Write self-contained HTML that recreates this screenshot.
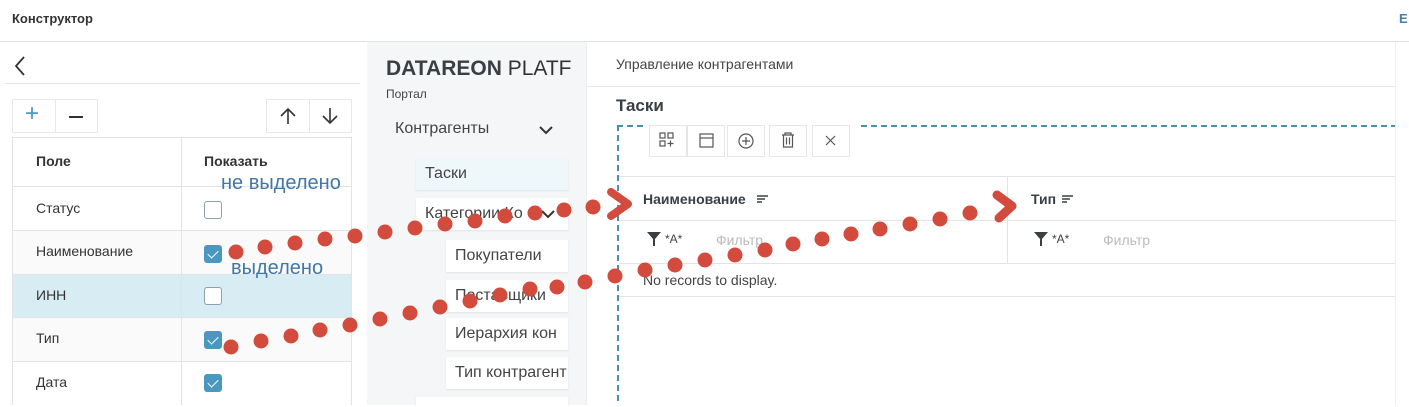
<!DOCTYPE html>
<html><head><meta charset="utf-8"><style>
*{box-sizing:border-box;margin:0;padding:0}
body{width:1409px;height:405px;overflow:hidden;background:#fff;font-family:"Liberation Sans",sans-serif;color:#333;position:relative}
.a{position:absolute}
.t{font-size:14px;color:#333}
.cb{position:absolute;width:18px;height:18px;border:1px solid #8aa1b1;border-radius:3px;background:#fff}
.cb.on{background:#4a98c0;border-color:#4a98c0}
.cb.on:after{content:"";position:absolute;left:5px;top:2px;width:5px;height:9px;border:solid #fff;border-width:0 1.5px 1.5px 0;transform:rotate(45deg)}
.mi{position:absolute;background:#fff;box-shadow:0 1px 2px rgba(0,0,0,.08);font-size:16px;color:#444;padding-left:9px;line-height:32px;white-space:nowrap;overflow:hidden}
.tb{position:absolute;top:125px;width:38px;height:32px;border:1px solid #e6e6e6;background:#fff}
</style></head><body>
<div class="a" style="left:12px;top:11px;font-size:13px;font-weight:bold;color:#333">Конструктор</div>
<div class="a" style="left:1399px;top:11px;font-size:13px;font-weight:bold;color:#4a7fa8">Е</div>
<div class="a" style="left:0;top:41px;width:1409px;height:1px;background:#e3e3e3"></div>

<svg class="a" style="left:10px;top:55px" width="20" height="22"><path d="M14 2 L6 11 L14 20" stroke="#333" stroke-width="1.8" fill="none"/></svg>
<div class="a" style="left:5px;top:83px;width:355px;height:1px;background:#e3e3e3"></div>
<div class="a" style="left:12px;top:99px;width:86px;height:34px;border:1px solid #e8e8e8"></div>
<div class="a" style="left:55px;top:99px;width:1px;height:34px;background:#e8e8e8"></div>
<div class="a" style="left:25px;top:100px;font-size:24px;color:#4a98c0;font-weight:300">+</div>
<div class="a" style="left:69px;top:116px;width:14px;height:1.5px;background:#333"></div>
<div class="a" style="left:266px;top:99px;width:86px;height:34px;border:1px solid #e8e8e8"></div>
<div class="a" style="left:309px;top:99px;width:1px;height:34px;background:#e8e8e8"></div>
<svg class="a" style="left:278px;top:106px" width="20" height="20"><path d="M10 18V3M3 10L10 3L17 10" stroke="#333" stroke-width="1.6" fill="none"/></svg>
<svg class="a" style="left:320px;top:106px" width="20" height="20"><path d="M10 2V17M3 10L10 17L17 10" stroke="#333" stroke-width="1.6" fill="none"/></svg>

<div class="a" style="left:12px;top:137px;width:340px;height:268px;border:1px solid #e3e3e3;border-bottom:none"></div>
<div class="a" style="left:13px;top:274px;width:338px;height:44px;background:#d7ecf3"></div>
<div class="a" style="left:13px;top:231px;width:338px;height:43px;background:#fafafa"></div>
<div class="a" style="left:13px;top:318px;width:338px;height:43px;background:#fafafa"></div>
<div class="a" style="left:181px;top:137px;width:1px;height:268px;background:#e3e3e3"></div>
<div class="a" style="left:12px;top:186px;width:340px;height:1px;background:#e3e3e3"></div>
<div class="a" style="left:12px;top:230px;width:340px;height:1px;background:#e3e3e3"></div>
<div class="a" style="left:12px;top:274px;width:340px;height:1px;background:#e3e3e3"></div>
<div class="a" style="left:12px;top:317px;width:340px;height:1px;background:#e3e3e3"></div>
<div class="a" style="left:12px;top:361px;width:340px;height:1px;background:#e3e3e3"></div>
<div class="a t" style="left:36px;top:153px;font-weight:bold">Поле</div>
<div class="a t" style="left:204px;top:153px;font-weight:bold">Показать</div>
<div class="a t" style="left:36px;top:200px">Статус</div>
<div class="a t" style="left:36px;top:243px">Наименование</div>
<div class="a t" style="left:36px;top:287px">ИНН</div>
<div class="a t" style="left:36px;top:330px">Тип</div>
<div class="a t" style="left:36px;top:374px">Дата</div>
<div class="cb" style="left:204px;top:201px"></div>
<div class="cb on" style="left:204px;top:245px"></div>
<div class="cb" style="left:204px;top:287px"></div>
<div class="cb on" style="left:204px;top:331px"></div>
<div class="cb on" style="left:204px;top:374px"></div>
<div class="a" style="left:221px;top:172px;font-size:20px;color:#3f78a8">не выделено</div>
<div class="a" style="left:231px;top:257px;font-size:20px;color:#3f78a8">выделено</div>

<div class="a" style="left:367px;top:42px;width:219px;height:363px;background:#f5f6f8"></div>
<div class="a" style="left:386px;top:57px;font-size:21px;color:#333;white-space:nowrap;width:200px;overflow:hidden"><b style="color:#3a3f44">DATAREON</b> PLATF</div>
<div class="a" style="left:386px;top:87px;font-size:12px;color:#444">Портал</div>
<div class="a" style="left:395px;top:120px;font-size:16px;color:#444">Контрагенты</div>
<svg class="a" style="left:538px;top:124px" width="16" height="12"><path d="M2 3L8 9L14 3" stroke="#333" stroke-width="2" fill="none"/></svg>
<div class="mi" style="left:416px;top:158px;width:152px;background:#eef8fb">Таски</div>
<div class="mi" style="left:416px;top:198px;width:152px">Категории Ко</div>
<svg class="a" style="left:540px;top:208px" width="16" height="12"><path d="M2 3L8 9L14 3" stroke="#333" stroke-width="2" fill="none"/></svg>
<div class="mi" style="left:446px;top:240px;width:122px">Покупатели</div>
<div class="mi" style="left:446px;top:280px;width:122px">Поставщики</div>
<div class="mi" style="left:446px;top:318px;width:122px">Иерархия кон</div>
<div class="mi" style="left:446px;top:357px;width:122px">Тип контрагент</div>
<div class="mi" style="left:416px;top:397px;width:152px;height:10px"></div>

<div class="a" style="left:586px;top:42px;width:1px;height:363px;background:#eee"></div>
<div class="a" style="left:1395px;top:42px;width:1px;height:363px;background:#eee"></div>
<div class="a" style="left:616px;top:56px;font-size:14px;color:#444">Управление контрагентами</div>
<div class="a" style="left:586px;top:86px;width:809px;height:1px;background:#e8e8e8"></div>
<div class="a" style="left:616px;top:96px;font-size:17px;font-weight:bold;color:#3a3f44">Таски</div>
<div class="a" style="left:617px;top:125px;width:2px;height:280px;background:repeating-linear-gradient(#4a90a8 0 6px,transparent 6px 10px)"></div>
<div class="a" style="left:617px;top:125px;width:26px;height:2px;background:repeating-linear-gradient(90deg,#4a90a8 0 6px,transparent 6px 10px)"></div>
<div class="a" style="left:861px;top:125px;width:534px;height:2px;background:repeating-linear-gradient(90deg,#4a90a8 0 6px,transparent 6px 10px)"></div>
<div class="tb" style="left:649px"></div><div class="tb" style="left:687px"></div><div class="tb" style="left:727px"></div><div class="tb" style="left:769px"></div><div class="tb" style="left:812px"></div>
<svg class="a" style="left:649px;top:125px" width="204" height="32" fill="none" stroke="#555" stroke-width="1.2">
<rect x="11" y="8" width="5" height="5"/><rect x="19" y="8" width="5" height="5"/><rect x="11" y="16" width="5" height="5"/><path d="M18.5 18.5h6M21.5 15.5v6"/>
<rect x="51" y="9" width="13" height="13"/><path d="M51 13h13"/>
<circle cx="97" cy="16" r="7"/><path d="M93 16h8M97 12v8"/>
<path d="M133 10h12M136 10v-2h6v2M134.5 10v12h9v-12M137.5 12.5v7M140.5 12.5v7"/>
<path d="M177 11l9 9M186 11l-9 9"/>
</svg>
<div class="a" style="left:619px;top:176px;width:776px;height:1px;background:#e3e3e3"></div>
<div class="a" style="left:619px;top:220px;width:776px;height:1px;background:#e3e3e3"></div>
<div class="a" style="left:619px;top:263px;width:776px;height:1px;background:#e3e3e3"></div>
<div class="a" style="left:619px;top:296px;width:776px;height:1px;background:#e3e3e3"></div>
<div class="a" style="left:1007px;top:176px;width:1px;height:87px;background:#e3e3e3"></div>
<div class="a" style="left:643px;top:191px;font-size:14px;font-weight:bold;color:#3a3f44">Наименование</div>
<svg class="a" style="left:757px;top:193px" width="12" height="12" stroke="#3a3f44" stroke-width="1.4"><path d="M0 3h11M0 6h8M0 9h5"/></svg>
<div class="a" style="left:1031px;top:191px;font-size:14px;font-weight:bold;color:#3a3f44">Тип</div>
<svg class="a" style="left:1062px;top:193px" width="12" height="12" stroke="#3a3f44" stroke-width="1.4"><path d="M0 3h11M0 6h8M0 9h5"/></svg>
<svg class="a" style="left:646px;top:231px" width="16" height="16"><path d="M1 1H15L9 8V15L7 15V8Z" fill="#3a3f44"/></svg>
<div class="a" style="left:665px;top:232px;font-size:12px;color:#444">*A*</div>
<div class="a" style="left:716px;top:232px;font-size:14px;color:#bbb">Фильтр</div>
<svg class="a" style="left:1033px;top:231px" width="16" height="16"><path d="M1 1H15L9 8V15L7 15V8Z" fill="#3a3f44"/></svg>
<div class="a" style="left:1052px;top:232px;font-size:12px;color:#444">*A*</div>
<div class="a" style="left:1103px;top:232px;font-size:14px;color:#bbb">Фильтр</div>
<div class="a" style="left:643px;top:272px;font-size:14px;color:#444">No records to display.</div>

<svg class="a" style="left:0;top:0" width="1409" height="405" fill="#d34b3c">
<circle cx="236" cy="252" r="7.5"/><circle cx="265" cy="247" r="7.5"/><circle cx="295" cy="243" r="7.5"/><circle cx="325" cy="239" r="7.5"/><circle cx="355" cy="236" r="7.5"/><circle cx="385" cy="232" r="7.5"/><circle cx="415" cy="228" r="7.5"/><circle cx="445" cy="224" r="7.5"/><circle cx="475" cy="221" r="7.5"/><circle cx="505" cy="216" r="7.5"/><circle cx="535" cy="213" r="7.5"/><circle cx="564" cy="210" r="7.5"/><circle cx="593" cy="207" r="7.5"/>
<path d="M611 192 L628 204 L611 216" stroke="#d34b3c" stroke-width="8" fill="none" stroke-linecap="round" stroke-linejoin="round"/>
<circle cx="231" cy="347" r="7.5"/><circle cx="261" cy="341" r="7.5"/><circle cx="291" cy="336" r="7.5"/><circle cx="320" cy="330" r="7.5"/><circle cx="350" cy="325" r="7.5"/><circle cx="380" cy="319" r="7.5"/><circle cx="410" cy="313" r="7.5"/><circle cx="440" cy="307" r="7.5"/><circle cx="470" cy="301" r="7.5"/><circle cx="500" cy="295" r="7.5"/><circle cx="530" cy="289" r="7.5"/><circle cx="557" cy="287" r="7.5"/><circle cx="585" cy="282" r="7.5"/><circle cx="615" cy="276" r="7.5"/><circle cx="645" cy="270" r="7.5"/><circle cx="675" cy="265" r="7.5"/><circle cx="705" cy="260" r="7.5"/><circle cx="735" cy="255" r="7.5"/><circle cx="765" cy="250" r="7.5"/><circle cx="793" cy="244" r="7.5"/><circle cx="822" cy="239" r="7.5"/><circle cx="851" cy="234" r="7.5"/><circle cx="880" cy="229" r="7.5"/><circle cx="910" cy="224" r="7.5"/><circle cx="940" cy="219" r="7.5"/><circle cx="970" cy="213" r="7.5"/>
<path d="M997 195 L1012 206 L999 218" stroke="#d34b3c" stroke-width="9" fill="none" stroke-linecap="round" stroke-linejoin="round"/>
</svg>
</body></html>
